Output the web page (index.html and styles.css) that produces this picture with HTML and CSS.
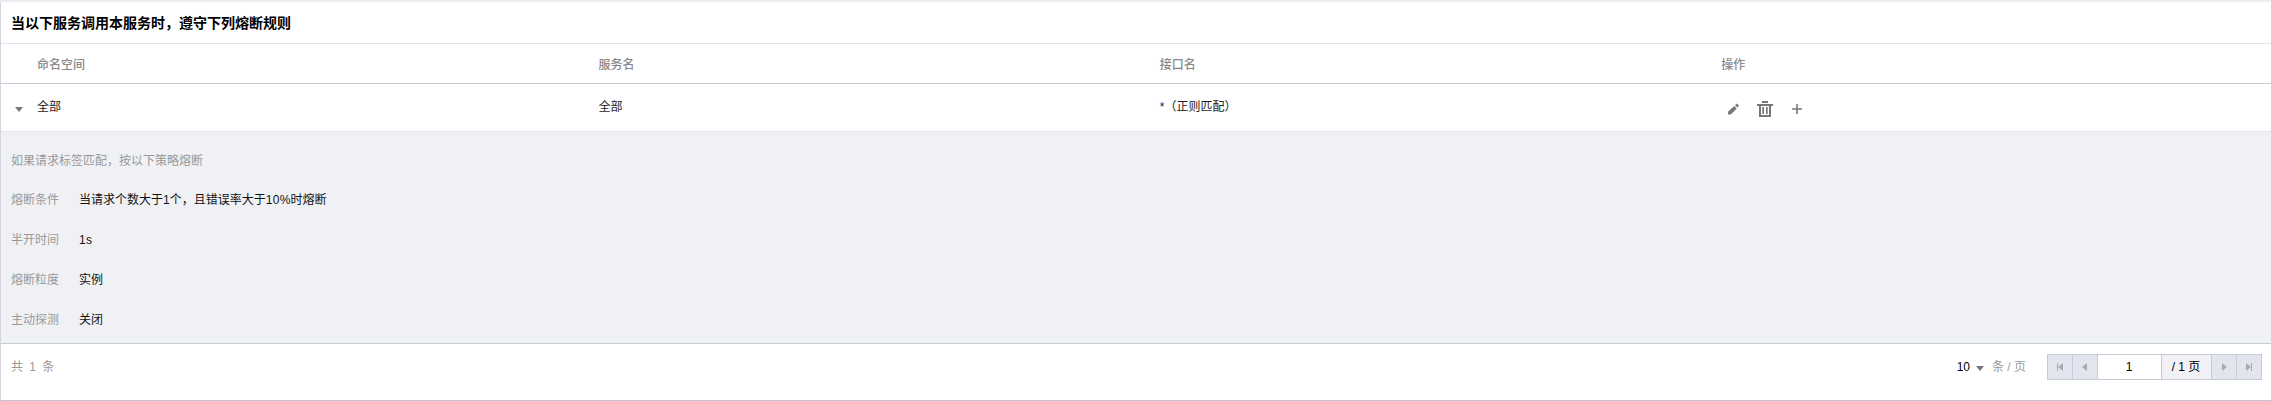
FILE: index.html
```html
<!DOCTYPE html>
<html lang="zh-CN">
<head>
<meta charset="utf-8">
<title>熔断规则</title>
<link rel="stylesheet" href="styles.css">
</head>
<body>
<section class="card">
  <h3 class="card-title">当以下服务调用本服务时，遵守下列熔断规则</h3>
  <div class="row head">
    <span class="expand"></span>
    <span class="cell">命名空间</span>
    <span class="cell">服务名</span>
    <span class="cell">接口名</span>
    <span class="cell">操作</span>
  </div>
  <div class="row body">
    <span class="expand"><svg class="caret" viewBox="0 0 8 5"><path d="M0 0h8L4 5z"/></svg></span>
    <span class="cell">全部</span>
    <span class="cell">全部</span>
    <span class="cell">*（正则匹配）</span>
    <span class="cell actions">
      <svg class="icon" viewBox="0 0 16 16"><path d="M3 13.5v-2.7l6.2-5.9 2.6 2.6-6 6zM10 4.2l1.8-1.7 2.3 2.3-1.7 1.8z"/></svg>
      <svg class="icon" viewBox="0 0 16 16"><path d="M5 0h6v2H5zM0 3h16v2h-2v11H2V5H0zM4 5v9h8V5zM5.3 6H7v7H5.300zM9 6h1.700v7H9z" fill-rule="evenodd"/></svg>
      <svg class="icon" viewBox="0 0 16 16"><path d="M7.200 3h1.600v4.200H13v1.600H8.800V13H7.200V8.800H3V7.200h4.200z"/></svg>
    </span>
  </div>
  <div class="detail">
    <p class="hint">如果请求标签匹配，按以下策略熔断</p>
    <dl class="item"><dt>熔断条件</dt><dd>当请求个数大于1个，且错误率大于<span class="num">10%</span>时熔断</dd></dl>
    <dl class="item"><dt>半开时间</dt><dd><span class="num">1s</span></dd></dl>
    <dl class="item"><dt>熔断粒度</dt><dd>实例</dd></dl>
    <dl class="item"><dt>主动探测</dt><dd>关闭</dd></dl>
  </div>
  <footer class="footer">
    <span class="total">共 1 条</span>
    <span class="size">10</span>
    <svg class="caret" viewBox="0 0 8 5"><path d="M0 0h8L4 5z"/></svg>
    <span class="unit">条 / 页</span>
    <div class="pager">
      <span class="btn"><svg viewBox="0 0 8 8"><path d="M1 0h1v8H1zM7 0v8L2 4z"/></svg></span>
      <span class="btn"><svg viewBox="0 0 8 8"><path d="M6 0v8L1 4z"/></svg></span>
      <span class="current">1</span>
      <span class="pages">/ 1 页</span>
      <span class="btn"><svg viewBox="0 0 8 8"><path d="M2 0v8l5-4z"/></svg></span>
      <span class="btn"><svg viewBox="0 0 8 8"><path d="M6 0h1v8H6zM1 0v8l5-4z"/></svg></span>
    </div>
  </footer>
</section>
</body>
</html>
```
FILE: styles.css
```css
* { box-sizing: border-box; }
body {
  margin: 0;
  background: #ececf3;
  color: #000;
  font: 12px/18px "Liberation Sans", "Noto Sans CJK SC", sans-serif;
}
.card {
  height: 399px;
  margin-top: 2px;
  background: #fff;
  border-left: 1px solid #d5d5e1;
  border-bottom: 1px solid #c3c3cf;
}
.card-title {
  height: 42px;
  margin: 0;
  padding-left: 10px;
  border-bottom: 1px solid #e1e2eb;
  font-size: 14px;
  line-height: 42px;
}
.row {
  display: grid;
  grid-template-columns: 36px repeat(4, 561.4px);
  align-items: center;
  overflow: hidden;
}
.head {
  height: 40px;
  padding-top: 2px;
  border-bottom: 1px solid #c9ccd5;
  color: #888;
  font-weight: 500;
}
.body {
  height: 48px;
  padding-bottom: 2px;
  border-bottom: 1px solid #e3e5ee;
  color: #222;
}
.expand { display: flex; padding: 5px 0 0 14px; }
.caret { width: 8px; height: 5px; fill: #777; }
.actions { display: flex; gap: 16px; padding: 5px 0 0 4px; }
.icon { width: 16px; height: 16px; fill: #777; }
.detail {
  height: 212px;
  padding: 20px 10px 0;
  background: #f0f1f5;
  border-bottom: 1px solid #c8cbd5;
}
.hint { margin: 0 0 21px; color: #999; }
.item { display: flex; margin: 0 0 22px; }
.item dt { width: 68px; color: #999; }
.item dd { margin: 0; color: #111; }
.num { letter-spacing: 0.3px; }
.footer {
  display: flex;
  align-items: center;
  height: 46px;
  padding: 0 9px 0 10px;
}
.total { margin-right: auto; color: #999; word-spacing: 3px; }
.size { margin-right: 6px; }
.footer > .caret { margin: 3px 8px 0 0; }
.unit { margin-right: 21px; color: #999; }
.pager {
  display: flex;
  height: 26px;
  border: 1px solid #c5cbd8;
  line-height: 24px;
  text-align: center;
}
.pager > span + span { border-left: 1px solid #c5cbd8; }
.btn {
  display: flex;
  align-items: center;
  justify-content: center;
  width: 25px;
  background: #e2e5ed;
}
.btn:first-child { width: 24px; }
.btn svg { width: 8px; height: 8px; fill: #aaa; }
.current { width: 64px; padding-right: 1px; }
.pages { width: 50px; padding-right: 1px; background: #f1f1f6; }
```
